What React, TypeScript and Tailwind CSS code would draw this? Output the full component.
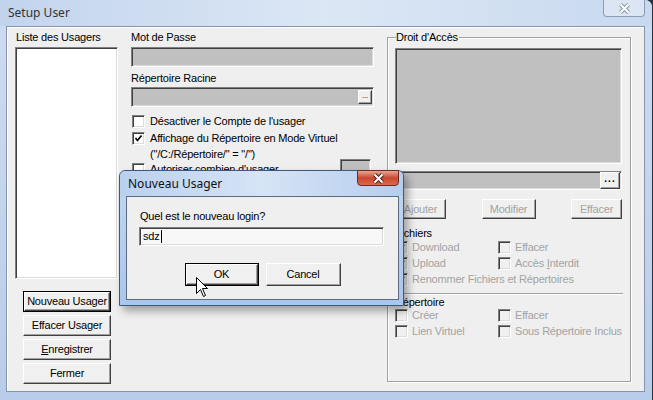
import React from "react";

const sunken =
  "border border-t-[#808080] border-l-[#808080] border-r-white border-b-white shadow-[inset_1px_1px_0_#404040,inset_-1px_-1px_0_#dcdcdc]";
const raised =
  "border border-t-white border-l-white border-r-[#404040] border-b-[#404040] shadow-[inset_-1px_-1px_0_#a0a0a0] bg-[#f0f0f0]";

function Box({ checked, disabled }: { checked?: boolean; disabled?: boolean }) {
  return (
    <span
      className={`w-[13px] h-[13px] shrink-0 flex items-center justify-center ${sunken} ${
        disabled ? "bg-[#f0f0f0]" : "bg-white"
      }`}
    >
      {checked && (
        <svg width="9" height="9" viewBox="0 0 9 9">
          <polyline
            points="1.5,4 3.5,6.5 7.5,1.5"
            fill="none"
            stroke={disabled ? "#a3a3a3" : "#000"}
            strokeWidth="1.7"
          />
        </svg>
      )}
    </span>
  );
}

function CheckItem({
  label,
  checked,
  disabled,
}: {
  label: React.ReactNode;
  checked?: boolean;
  disabled?: boolean;
}) {
  return (
    <div className="flex items-center h-[16px] whitespace-nowrap">
      <Box checked={checked} disabled={disabled} />
      <span className={disabled ? "ml-[4px] text-[#a3a3a3]" : "ml-[4px]"}>{label}</span>
    </div>
  );
}

function Btn({
  children,
  def,
  disabled,
  className,
}: {
  children: React.ReactNode;
  def?: boolean;
  disabled?: boolean;
  className?: string;
}) {
  return (
    <div className={`${def ? "border border-black" : ""} ${className ?? ""}`}>
      <div
        className={`h-full flex items-center justify-center ${raised} ${
          disabled ? "text-[#a3a3a3]" : "text-black"
        }`}
      >
        {children}
      </div>
    </div>
  );
}

function Dots() {
  return (
    <div className={`h-[17px] w-[20px] flex items-center justify-center ${raised}`}>
      <span className="text-[10px] font-bold leading-none tracking-[1px] -mt-[3px]">...</span>
    </div>
  );
}

function XGlyph({ outline }: { outline: string }) {
  return (
    <svg width="13" height="11" viewBox="0 0 13 11">
      <path d="M2.5 1.5 L10.5 9.5 M10.5 1.5 L2.5 9.5" stroke={outline} strokeWidth="4" />
      <path d="M2.5 1.5 L10.5 9.5 M10.5 1.5 L2.5 9.5" stroke="#fff" strokeWidth="2" />
    </svg>
  );
}

export default function App() {
  return (
    <div className="relative w-[653px] h-[400px] overflow-hidden bg-[#27323f] font-['Liberation_Sans',Arial,sans-serif] text-[11px] leading-[13px] tracking-[-0.2px] text-black">
      {/* main window */}
      <div className="w-[652px] h-[400px] flex flex-col rounded-tr-[7px] bg-gradient-to-b from-[#cddcf0] to-[#b9cdea]">
        <div className="h-[26px] flex items-start rounded-tr-[7px] bg-gradient-to-r from-[#c2d4ed] via-[#dce7f5] to-[#c8d9ef]">
          <span className="ml-[8px] mt-[4px] font-['Noto_Sans',sans-serif] text-[12px] leading-[17px] tracking-normal text-[#333]">
            Setup User
          </span>
          <div className="ml-auto mr-[7px] w-[42px] h-[17px] flex items-center justify-center border border-t-0 border-[#8a9cb6] rounded-b-[4px] bg-[#dbe5f3]">
            <XGlyph outline="#8a94a3" />
          </div>
        </div>

        <div className="flex-1 flex pl-[6px] pr-[7px] pb-[8px]">
          <div className="flex-1 flex pt-[4px] border border-[#8795a8] bg-[#efefef] shadow-[inset_1px_1px_0_#fff]">
            {/* left column */}
            <div className="ml-[8px] w-[103px] flex flex-col">
              <div className="h-[13px] ml-[1px]">Liste des Usagers</div>
              <div className={`mt-[3px] h-[232px] bg-white ${sunken}`} />
              <div className="mt-[12px] ml-[8px] w-[88px] flex flex-col gap-[3px]">
                <Btn def className="h-[21px]">Nouveau Usager</Btn>
                <Btn className="h-[21px]">Effacer Usager</Btn>
                <Btn className="h-[21px]">
                  <span>
                    <span className="underline">E</span>nregistrer
                  </span>
                </Btn>
                <Btn className="h-[21px]">Fermer</Btn>
              </div>
            </div>

            {/* middle column */}
            <div className="ml-[13px] w-[243px] flex flex-col">
              <div className="h-[13px]">Mot de Passe</div>
              <div className={`mt-[3px] h-[20px] bg-[#c0c0c0] ${sunken}`} />
              <div className="mt-[5px] h-[13px]">Répertoire Racine</div>
              <div className={`mt-[2px] h-[20px] bg-[#c0c0c0] flex items-center justify-end pr-[1px] ${sunken}`}>
                <div className={`h-[14px] w-[14px] flex items-center justify-center ${raised}`}>
                  <span className="text-[8px] leading-none -mt-[3px]">...</span>
                </div>
              </div>
              <div className="mt-[6px] flex flex-col">
                <div className="ml-[1px] flex items-center h-[17px]">
                  <Box />
                  <span className="ml-[5px]">Désactiver le Compte de l'usager</span>
                </div>
                <div className="ml-[1px] flex items-center h-[17px]">
                  <Box checked />
                  <span className="ml-[5px]">Affichage du Répertoire en Mode Virtuel</span>
                </div>
                <div className="ml-[19px] h-[14px] flex items-center">("/C:/Répertoire/" = "/")</div>
                <div className="ml-[1px] flex items-start h-[20px]">
                  <div className="mt-[2px] flex items-center">
                    <Box />
                    <span className="ml-[5px]">Autoriser combien d'usager</span>
                  </div>
                  <div className={`ml-auto mr-[3px] -mt-[2px] w-[31px] h-[20px] bg-[#c0c0c0] ${sunken}`} />
                </div>
              </div>
            </div>

            {/* right group */}
            <div className="relative ml-[13px] mt-[6px] w-[244px] h-[345px] border border-[#a0a0a0] shadow-[inset_1px_1px_0_#fff,1px_1px_0_#fff]">
              <span className="absolute left-[8px] -top-[7px] bg-[#efefef] pr-[1px]">Droit d'Accès</span>
              <div className="ml-[7px] mt-[10px] w-[227px] flex flex-col">
                <div className={`h-[116px] bg-[#c0c0c0] ${sunken}`} />
                <div className={`mt-[7px] h-[19px] bg-[#c0c0c0] flex items-center justify-end pr-[1px] ${sunken}`}>
                  <Dots />
                </div>
                <div className="mt-[9px] h-[20px] flex justify-between">
                  <Btn disabled className="w-[51px]">Ajouter</Btn>
                  <Btn disabled className="w-[54px]">Modifier</Btn>
                  <Btn disabled className="w-[51px]">Effacer</Btn>
                </div>
                <div className="mt-[8px] h-[12px] leading-[12px]">Fichiers</div>
                <div className="grid grid-cols-[103px_1fr]">
                  <CheckItem label="Download" checked disabled />
                  <CheckItem label="Effacer" disabled />
                  <CheckItem label="Upload" checked disabled />
                  <CheckItem
                    label={
                      <span>
                        Accès <span className="underline">I</span>nterdit
                      </span>
                    }
                    disabled
                  />
                  <div className="col-span-2">
                    <CheckItem label="Renommer Fichiers et Répertoires" checked disabled />
                  </div>
                </div>
                <div className="mt-[6px] w-[228px] h-[2px] border-t border-t-[#a0a0a0] border-b border-b-white" />
                <div className="mt-[1px] h-[13px]">Répertoire</div>
                <div className="-mt-[2px] grid grid-cols-[103px_1fr]">
                  <CheckItem label="Créer" disabled />
                  <CheckItem label="Effacer" disabled />
                  <CheckItem label="Lien Virtuel" disabled />
                  <CheckItem label="Sous Répertoire Inclus" disabled />
                </div>
              </div>
            </div>
          </div>
        </div>
      </div>

      {/* dialog */}
      <div className="absolute left-[119px] top-[170px] w-[285px] h-[136px] flex flex-col border border-[#3d5a7e] rounded-t-[6px] bg-gradient-to-b from-[#c3d8f2] to-[#a9c6ee] shadow-[4px_5px_8px_rgba(0,0,0,0.35)]">
        <div className="h-[25px] flex items-start rounded-t-[6px] bg-gradient-to-r from-[#b9d0ef] via-[#d6e4f6] to-[#b5cdee]">
          <span className="ml-[8px] mt-[4px] font-['Noto_Sans',sans-serif] text-[12px] leading-[17px] tracking-normal text-[#111]">
            Nouveau Usager
          </span>
          <div className="ml-auto mr-[4px] -mt-[1px] w-[42px] h-[16px] flex items-center justify-center border border-[#6e2a1f] rounded-b-[4px] bg-gradient-to-b from-[#e8a493] via-[#c9462f] to-[#d96a50]">
            <XGlyph outline="#5a1f16" />
          </div>
        </div>
        <div className="flex-1 flex pl-[6px] pr-[4px] pb-[5px]">
          <div className="flex-1 flex flex-col border border-[#5c6b80] bg-[#efefef] pt-[13px] pl-[12px]">
            <div className="ml-[1px] h-[13px]">Quel est le nouveau login?</div>
            <div className={`mt-[4px] w-[245px] h-[19px] bg-[#f8f8f8] flex items-center pl-[3px] ${sunken}`}>
              <span>sdz</span>
              <span className="ml-[1px] w-[1px] h-[13px] bg-black" />
            </div>
            <div className="mt-[17px] -ml-[12px] flex justify-center gap-[7px]">
              <Btn def className="w-[74px] h-[23px]">OK</Btn>
              <Btn className="w-[75px] h-[23px]">Cancel</Btn>
            </div>
          </div>
        </div>
      </div>

      {/* mouse pointer */}
      <svg className="absolute left-[196px] top-[277px]" width="13" height="21" viewBox="0 0 13 21">
        <path
          d="M0.5 0.5 L0.5 16.5 L4.5 12.5 L7.5 19.5 L9.5 18.5 L6.5 11.5 L11.5 11.5 Z"
          fill="#fff"
          stroke="#000"
          strokeWidth="1"
          strokeLinejoin="round"
        />
      </svg>
    </div>
  );
}
